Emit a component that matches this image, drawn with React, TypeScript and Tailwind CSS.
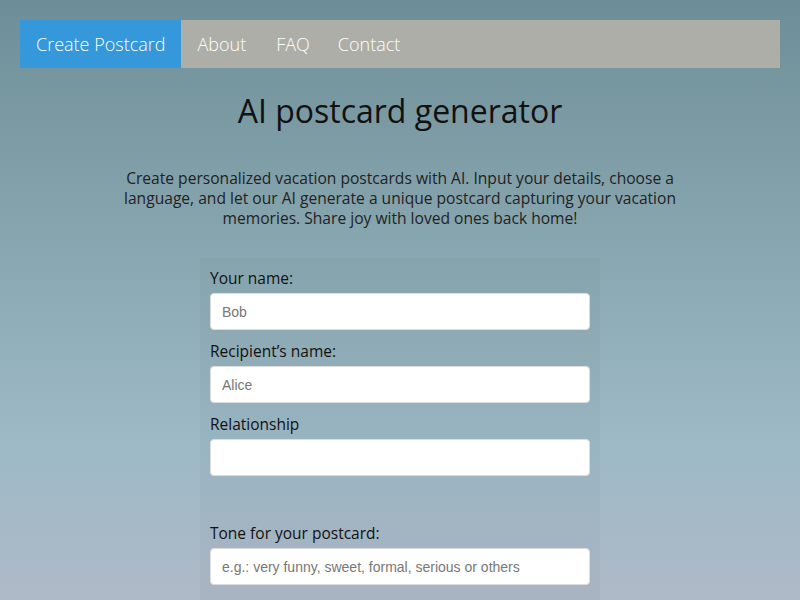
const fields = [
  { label: "Your name:", placeholder: "Bob" },
  { label: "Recipient’s name:", placeholder: "Alice" },
  { label: "Relationship", placeholder: "" },
];

function Field({ label, placeholder }: { label: string; placeholder: string }) {
  return (
    <div className="mb-[11px]">
      <label className="mb-[5px] block text-[15.5px] leading-[20px] font-medium text-[#111]">{label}</label>
      <input
        type="text"
        placeholder={placeholder}
        className="h-[37px] w-full rounded-[4px] border border-[#ddd] bg-white px-[11px] font-['Liberation_Sans',Arial,sans-serif] text-[14px] text-[#333] placeholder:text-[#777] outline-none"
      />
    </div>
  );
}

export default function App() {
  return (
    <div className="min-h-[600px] bg-[linear-gradient(180deg,#6d8e98_0%,#86a4ae_35%,#9dbac6_70%,#b3b9c8_100%)] px-5 pt-5 font-['Open_Sans',sans-serif]">
      <nav className="flex h-12 items-stretch bg-[#aeaea8] text-[18px] font-light text-white">
        <a className="flex items-center bg-[#3498db] px-4">Create Postcard</a>
        <a className="flex items-center px-4">About</a>
        <a className="flex items-center px-[14px]">FAQ</a>
        <a className="flex items-center px-[14px]">Contact</a>
      </nav>

      <h1 className="mt-6 text-center text-[32px] leading-[38px] font-medium text-[#111]">
        AI postcard generator
      </h1>
      <p className="mx-auto mt-[38px] max-w-[580px] text-center text-[15.6px] leading-[20px] text-[#222]">
        Create personalized vacation postcards with AI. Input your details, choose a language, and let our AI
        generate a unique postcard capturing your vacation memories. Share joy with loved ones back home!
      </p>

      <form className="mx-auto mt-[30px] w-[400px] bg-black/[0.025] px-[10px] pt-[10px] pb-6">
        {fields.map((f) => (
          <Field key={f.label} label={f.label} placeholder={f.placeholder} />
        ))}
        <div className="h-9" />
        <Field label="Tone for your postcard:" placeholder="e.g.: very funny, sweet, formal, serious or others" />
        <p className="text-center text-[15px] leading-[20px] text-[#222]">Choose the language for your postcard</p>
      </form>
    </div>
  );
}
